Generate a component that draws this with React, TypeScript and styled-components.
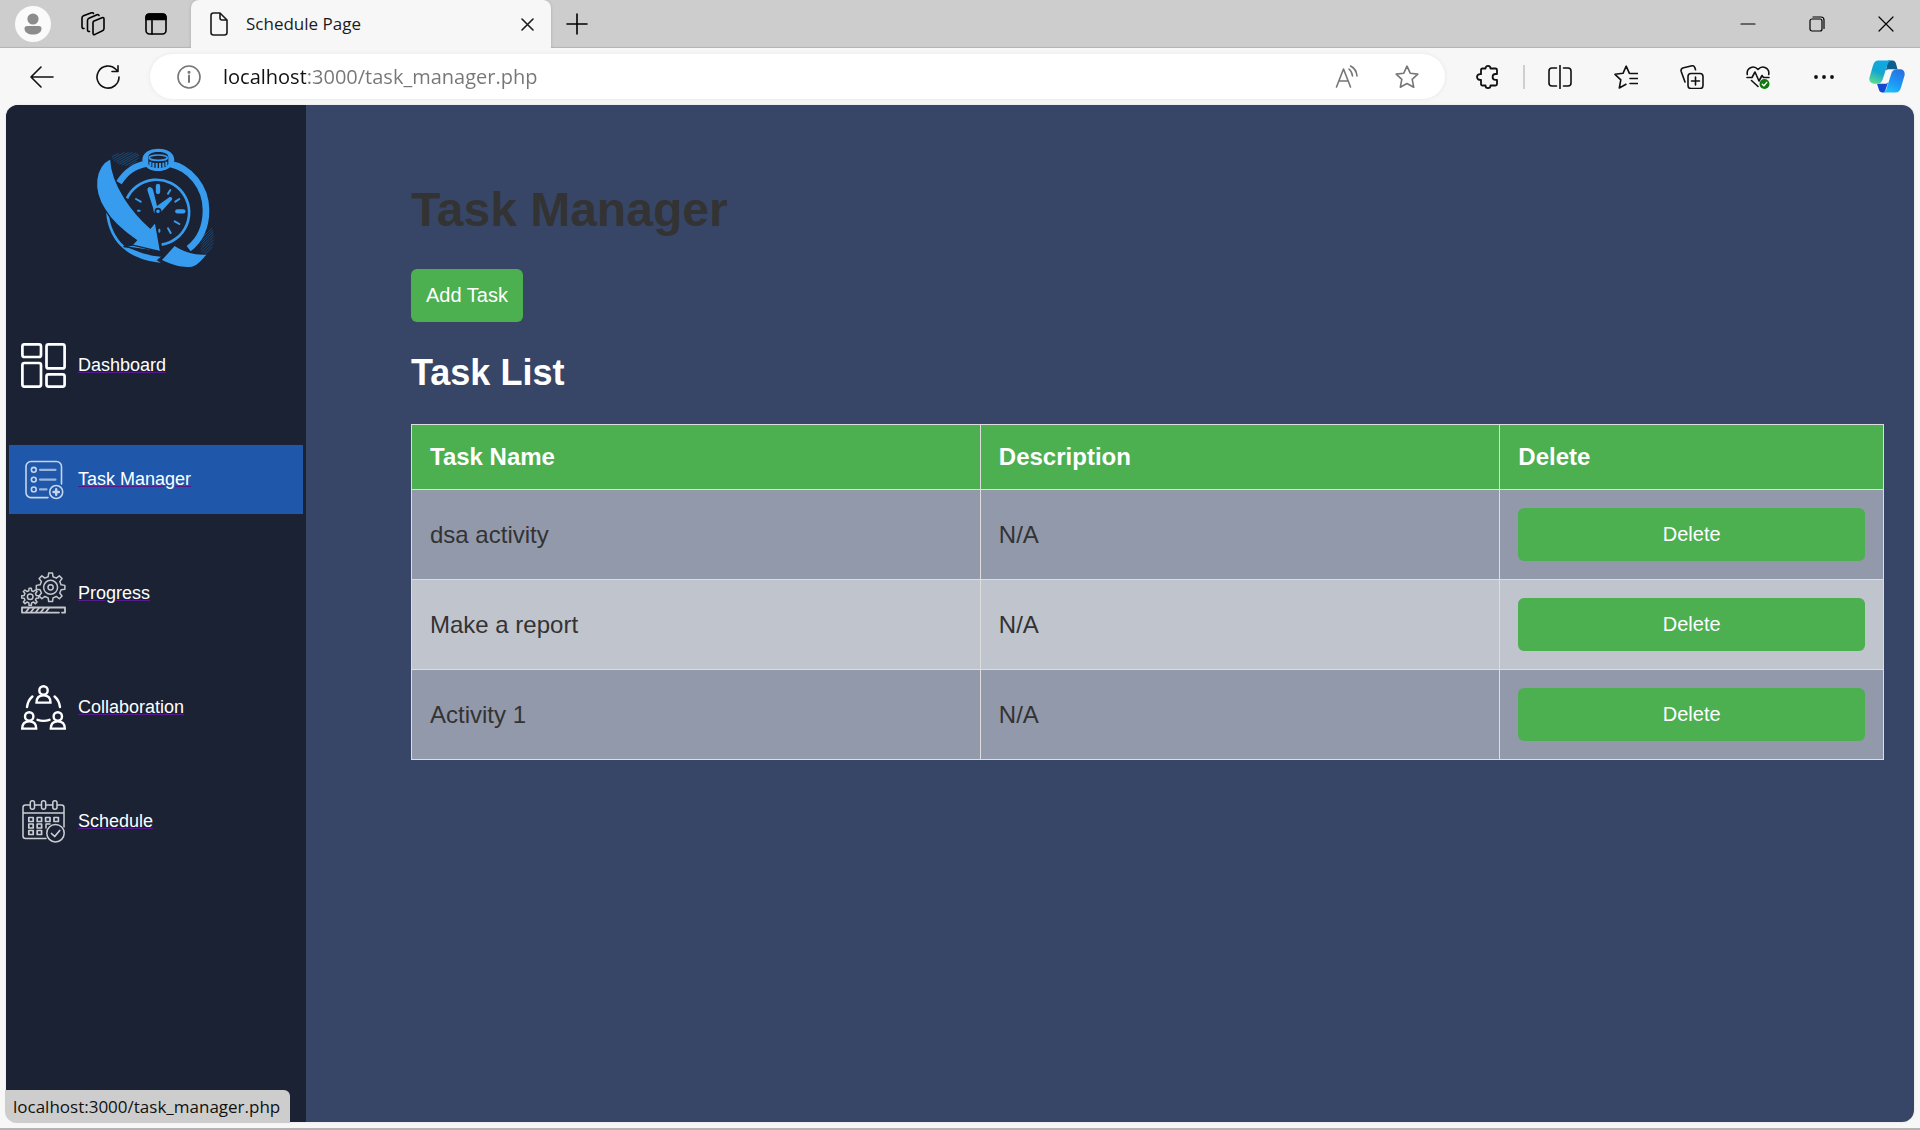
import React from "react";
import styled, { createGlobalStyle } from "styled-components";

const ui = `"Open Sans", "Noto Sans", sans-serif`;
const arial = `"Liberation Sans", Arial, sans-serif`;

const GlobalStyle = createGlobalStyle`
  *, *::before, *::after { box-sizing: border-box; }
  body { margin: 0; background: #f7f7f7; font-family: ${arial}; }
  button { font: inherit; color: inherit; border: 0; background: none; padding: 0; cursor: pointer; }
`;

const Window = styled.div`
  display: flex;
  flex-direction: column;
  min-height: 100vh;
  border-bottom: 2px solid #b3b3b3;
`;

const TabStrip = styled.div`
  display: flex;
  align-items: center;
  height: 48px;
  background: #cdcdcd;
  box-shadow: inset 0 -2px 1px -1px #b4b4b4;
  font-family: ${ui};
`;

const StripButton = styled.button<{ $w: number }>`
  display: flex;
  align-items: center;
  justify-content: center;
  width: ${(p) => p.$w}px;
  height: 48px;
`;

const Tab = styled.div`
  display: flex;
  align-items: center;
  width: 360px;
  height: 48px;
  padding: 0 8px 0 17px;
  gap: 16px;
  border-radius: 8px 8px 0 0;
  background: #f7f7f7;
  box-shadow: 0 0 3px #a9a9a9;
  clip-path: inset(0 -4px 0 -4px);
  font-size: 17px;
  line-height: 24px;
  color: #1b1b1b;
`;

const TabTitle = styled.span`
  flex: 1;
`;

const Spacer = styled.div`
  flex: 1;
`;

const Toolbar = styled.div`
  display: flex;
  align-items: center;
  height: 57px;
  padding: 0 3px 0 9px;
  background: #f7f7f7;
  color: #111;
`;

const ToolButton = styled.button<{ $w?: number }>`
  display: flex;
  align-items: center;
  justify-content: center;
  flex: none;
  width: ${(p) => p.$w ?? 66}px;
  height: 45px;
`;

const AddressBar = styled.div`
  display: flex;
  align-items: center;
  flex: 1;
  height: 45px;
  margin: 0 10px 0 9px;
  padding: 0 8px 0 9px;
  border-radius: 23px;
  background: #fff;
  box-shadow: 0 0 4px #e6e6e6;
  color: #767676;
`;

const AddressInput = styled.input`
  flex: 1;
  min-width: 0;
  height: 32px;
  margin: 0;
  padding: 0 0 0 4px;
  border: 0;
  outline: 0;
  font-family: ${ui};
  font-size: 20px;
  line-height: 32px;
  color: #767676;
  background: linear-gradient(90deg, #111 87px, #767676 87px);
  -webkit-background-clip: text;
  background-clip: text;
  -webkit-text-fill-color: transparent;
`;

const Divider = styled.div`
  width: 2px;
  height: 24px;
  margin: 0 2px;
  background: #cfcfcf;
`;

const Viewport = styled.div`
  position: relative;
  display: flex;
  flex: 1;
  margin: 0 6px 6px;
  border-radius: 12px;
  background: #374666;
  box-shadow: 0 0 2px #d5d5d5;
`;

const Sidebar = styled.aside`
  flex: none;
  width: 300px;
  padding: 25px 3px;
  border-radius: 12px 0 0 12px;
  background: #1a2234;
`;

const Brand = styled.div`
  display: flex;
  justify-content: center;
  margin-bottom: 51px;
`;

const Nav = styled.nav`
  display: flex;
  flex-direction: column;
  gap: 45px;
`;

const NavLink = styled.a<{ $active?: boolean }>`
  display: flex;
  align-items: center;
  gap: 12px;
  padding: 12px;
  background: ${(p) => (p.$active ? "#1f57ab" : "transparent")};
  color: #fff;
  font-size: 18px;
  line-height: 21px;
  text-decoration: none;

  span {
    text-decoration: underline #551a8b;
  }
`;

const Main = styled.main`
  flex: 1;
  min-width: 0;
  padding: 77px 30px 30px 105px;
  color: #333;
`;

const Title = styled.h1`
  margin: 0 0 32px;
  font-size: 48px;
  line-height: 55px;
`;

const Subtitle = styled.h2`
  margin: 30px 0;
  font-size: 36px;
  line-height: 42px;
  color: #fff;
`;

const GreenButton = styled.button<{ $block?: boolean }>`
  display: block;
  width: ${(p) => (p.$block ? "100%" : "auto")};
  padding: 15px;
  border-radius: 6px;
  background: #4caf50;
  color: #fff;
  font-size: 20px;
  line-height: 23px;
`;

const TaskTable = styled.table`
  width: 100%;
  border-collapse: collapse;
  font-size: 24px;
  line-height: 28px;

  th, td {
    padding: 18px;
    border: 1px solid #ddd;
    text-align: left;
  }
  th {
    background: #4caf50;
    color: #fff;
  }
  tbody tr { background: #9299ab; }
  tbody tr:nth-child(even) { background: #c0c4cc; }
`;

const StatusBubble = styled.div`
  position: absolute;
  left: -1px;
  bottom: -1px;
  height: 33px;
  padding: 0 10px 0 8px;
  border-radius: 0 6px 0 12px;
  background: #cdcdcd;
  color: #111;
  font-family: ${ui};
  font-size: 17px;
  line-height: 33px;
`;

type IconProps = { w?: number; h?: number; sw?: number; box?: string; children: React.ReactNode };

function Icon({ w = 24, h = 24, sw = 1.6, box, children }: IconProps) {
  return (
    <svg width={w} height={h} viewBox={box ?? `0 0 ${w} ${h}`} fill="none" stroke="currentColor"
      strokeWidth={sw} strokeLinecap="round" strokeLinejoin="round" aria-hidden="true">
      {children}
    </svg>
  );
}

const STAR = "M12 1.200l3.200 7 7.600.9-5.600 5.200 1.500 7.900-6.700-3.700-6.700 3.700 1.500-7.900L1.200 9.100l7.600-.9z";

function Logo() {
  return (
    <svg width="150" height="150" viewBox="3 0 450 450" fill="none" aria-label="Logo" role="img">
      <g stroke="#1d4a74" strokeWidth="3">
        <path d="M96 80l20-10M97 87l36-20M102 92l44-25M107 96l50-29M112 100l55-31M118 103l56-32M126 105l52-30M136 107l40-23M148 107l22-13" />
        <path d="M368 322l28-28M366 332l32-32M364 341l36-36M363 350l38-38M362 359l39-39M364 366l37-37M369 370l31-31M376 372l22-22" />
      </g>
      <path d="M117 158C140 122 164 108 200 101" stroke="#379bee" strokeWidth="19" />
      <path d="M268 101C330 112 378 172 378 240C378 290 360 330 326 356" stroke="#379bee" strokeWidth="20" />
      <path d="M78 243C82 320 130 388 243 398L230 391L243 380C185 376 140 350 131 346C105 322 92 290 88 262Z" fill="#379bee" />
      <path d="M187 92C186 68 208 56 235 56C262 56 284 68 283 92L272 108C262 128 206 128 198 108Z" fill="#379bee" />
      <path d="M205 82C205 70 218 66 235 66C252 66 265 70 265 82V102C258 118 212 118 205 102Z" fill="#1a2234" />
      <ellipse cx="235" cy="83" rx="27" ry="8" stroke="#379bee" strokeWidth="5" />
      <path d="M211 95v13M220 98v15M230 99v16M240 99v16M250 98v15M259 95v13" stroke="#379bee" strokeWidth="6" />
      <path d="M141 205A98 98 0 1 1 245 344" stroke="#379bee" strokeWidth="8" />
      <g stroke="#379bee" strokeLinecap="round">
        <path d="M234 168v18" strokeWidth="13" />
        <path d="M292 244h18" strokeWidth="13" />
        <path d="M271 180l-7 11M298 207l-12 8M284 274l14 8M264 295l8 14M238 299v6M168 207l14 8M174 242h5" strokeWidth="6" />
      </g>
      <path d="M202 180Q203 170 211 171Q219 174 220 182L231 228L269 201Q278 199 276 209L245 244Q240 254 230 252Q219 248 220 236Z" fill="#379bee" />
      <circle cx="234" cy="244" r="8" fill="#379bee" stroke="#1a2234" strokeWidth="5" />
      <path d="M92 85C42 110 36 180 74 238C96 276 130 304 169 331L155 346L131 350L242 366L226 276L211 294C164 252 95 170 92 85Z"
        fill="#379bee" stroke="#1a2234" strokeWidth="4" />
      <path d="M131 349L152 344L238 364" stroke="#1a2234" strokeWidth="4" />
      <path d="M284 348L246 390C275 405 310 414 335 410C354 406 366 388 379 374C346 376 312 367 284 348Z" fill="#379bee" />
    </svg>
  );
}

function DashboardIcon() {
  return (
    <Icon w={45} h={45} sw={2.7}>
      <rect x="1.400" y="1.400" width="18.600" height="12.600" rx="2" />
      <rect x="25.500" y="1.400" width="18.100" height="24" rx="2" />
      <rect x="1.400" y="20" width="18.600" height="23.600" rx="2" />
      <rect x="25.500" y="31.300" width="18.100" height="12.300" rx="2" />
    </Icon>
  );
}

function TaskIcon() {
  return (
    <Icon w={45} h={45} sw={1.6}>
      <g opacity="0.75">
        <path d="M27 40.600H10a5 5 0 0 1-5-5V9.500a5 5 0 0 1 5-5h25.500a5 5 0 0 1 5 5V27" />
        <circle cx="12.800" cy="12.800" r="2.400" />
        <circle cx="12.800" cy="22.600" r="2.400" />
        <circle cx="12.800" cy="32.400" r="2.400" />
        <path d="M19 12.800h15.500M19 22.600h15.500M19 32.400h6.500" strokeWidth="2.200" opacity="0.75" />
        <circle cx="35.200" cy="35" r="6.500" />
        <path d="M35.200 32.300v5.400M32.500 35h5.400" strokeWidth="2.400" />
      </g>
    </Icon>
  );
}

function gear(cx: number, cy: number, outer: number, inner: number, teeth: number) {
  const points: string[] = [];
  const step = (Math.PI * 2) / teeth;
  for (let i = 0; i < teeth; i++) {
    const mid = i * step - Math.PI / 2;
    [[-0.29, inner], [-0.17, outer], [0.17, outer], [0.29, inner]].forEach(([offset, r]) => {
      const angle = mid + offset * step;
      points.push(`${(cx + r * Math.cos(angle)).toFixed(2)},${(cy + r * Math.sin(angle)).toFixed(2)}`);
    });
  }
  return points.join(" ");
}

function ProgressIcon() {
  return (
    <Icon w={45} h={45} sw={1.5}>
      <g opacity="0.75">
        <polygon points={gear(29.6, 16.3, 14.4, 10.8, 8)} />
        <circle cx="29.600" cy="16.300" r="7" />
        <circle cx="29.600" cy="16.300" r="2.600" />
        <polygon points={gear(9.2, 25.8, 8.6, 6.2, 8)} />
        <circle cx="9.200" cy="25.800" r="2.800" />
        <path d="M38 41.600H1V36.500h43v5.100h-3" strokeWidth="1.800" />
        <path d="M5 41l3-4M10 41l3-4M15 41l3-4M20 41l3-4M25 41l3-4" strokeWidth="1.800" />
      </g>
    </Icon>
  );
}

function Person({ x, y }: { x: number; y: number }) {
  return (
    <g transform={`translate(${x} ${y})`}>
      <circle cx="0" cy="0" r="4.200" />
      <path d="M-7 12.200C-7 7.600-4.600 5 0 5s7 2.600 7 7.200z" strokeLinejoin="miter" />
    </g>
  );
}

function CollaborationIcon() {
  return (
    <Icon w={45} h={45} sw={2.4}>
      <Person x={22.5} y={5.4} />
      <Person x={8.2} y={31.4} />
      <Person x={36.8} y={31.4} />
      <path d="M11.400 11.500C8.400 14 6.600 17.500 6 22M33.600 11.500C36.600 14 38.400 17.500 39 22M16.500 34.800c4 1.400 8 1.400 12 0" />
    </Icon>
  );
}

function ScheduleIcon() {
  const cells = [[9.8, 20.5], [18.2, 20.5], [26.6, 20.5], [35, 20.5], [9.8, 27], [18.2, 27], [9.8, 33.5], [18.2, 33.5]];
  return (
    <Icon w={45} h={45} sw={1.5}>
      <g opacity="0.78">
        <path d="M8.800 6H4.500Q2 6 2 8.500V37q0 2.500 2.500 2.500H25M14 6h6M25.500 6h6M36.500 6h4q2.500 0 2.500 2.500V28M2 14h41" />
        <rect x="9.300" y="1.800" width="4.200" height="8.400" rx="2" />
        <rect x="20.500" y="1.800" width="4.200" height="8.400" rx="2" />
        <rect x="31.800" y="1.800" width="4.200" height="8.400" rx="2" />
        {cells.map(([x, y]) => (
          <rect key={`${x}-${y}`} x={x - 2} y={y - 2} width="4.400" height="4" strokeWidth="1.700" />
        ))}
        <path d="M25 29v-4h4" />
        <circle cx="34.500" cy="34.200" r="8.700" />
        <path d="M30.500 34.500l3.200 3 5-6" strokeWidth="1.700" />
      </g>
    </Icon>
  );
}

function CopilotIcon() {
  return (
    <svg width="36" height="33" viewBox="0 0 36 33" aria-hidden="true">
      <defs>
        <linearGradient id="cp-left" x1="0.6" y1="0" x2="0.2" y2="1">
          <stop offset="0" stopColor="#0fa8e4" />
          <stop offset="0.5" stopColor="#13a7cf" />
          <stop offset="1" stopColor="#5fdc8c" />
        </linearGradient>
        <linearGradient id="cp-right" x1="0.8" y1="0" x2="0.3" y2="1">
          <stop offset="0" stopColor="#2a6fe0" />
          <stop offset="0.6" stopColor="#1b9af7" />
          <stop offset="1" stopColor="#1cc3fb" />
        </linearGradient>
      </defs>
      <path d="M19 .500h4.500c2 0 3 1.500 3.600 3.500L28.500 9.300H20c-1.500 0-2.300.4-3.200 1.500z" fill="#0c5f8e" />
      <path d="M8 23.700h8c1.500 0 2.300-.4 3.200-1.500L15.500 32.500h-2c-2.200 0-3.300-1.500-3.800-3.500z" fill="#1747d1" />
      <path d="M9.500.500H23c-2.800.3-4 2-4.700 4.500L13.800 19c-1 3.200-2.500 4.700-5.500 4.700H5c-3.500 0-5.300-2.700-4.500-6.200L4 5.500C5 2.200 6.500.500 9.500.500z" fill="url(#cp-left)" />
      <path d="M26.500 32.500H13c2.800-.3 4-2 4.700-4.500L22.200 14c1-3.200 2.500-4.700 5.500-4.700H31c3.500 0 5.300 2.700 4.500 6.200L32 27.500c-1 3.300-2.500 5-5.500 5z" fill="url(#cp-right)" />
    </svg>
  );
}

const links = [
  { label: "Dashboard", icon: <DashboardIcon /> },
  { label: "Task Manager", icon: <TaskIcon />, active: true },
  { label: "Progress", icon: <ProgressIcon /> },
  { label: "Collaboration", icon: <CollaborationIcon /> },
  { label: "Schedule", icon: <ScheduleIcon /> },
];

const tasks = [
  { name: "dsa activity", description: "N/A" },
  { name: "Make a report", description: "N/A" },
  { name: "Activity 1", description: "N/A" },
];

function BrowserTabs() {
  return (
    <TabStrip>
      <StripButton $w={66} aria-label="Profile">
        <svg width="36" height="36" viewBox="0 0 36 36" aria-hidden="true">
          <circle cx="18" cy="18" r="18" fill="#fafafa" />
          <circle cx="18" cy="13" r="5.600" fill="#8c8c8c" />
          <path d="M9.500 22.500q0-2.500 2.500-2.500h12q2.500 0 2.500 2.500c0 4-4 6-8.500 6s-8.500-2-8.500-6z" fill="#8c8c8c" />
        </svg>
      </StripButton>
      <StripButton $w={54} aria-label="Workspaces">
        <Icon>
          <path d="M12.500 9.200l8.500-3.500q2-.7 2 1.300v9.500q0 1.600-1.500 2.300l-7.500 3.600q-2 .8-2-1.300V11q0-1.300.5-1.800z" />
          <path d="M8.500 19.500q-2 .3-2-1.800V8.500q0-1.500 1.500-2.200L16 2.700q1.600-.5 2 .8" />
          <path d="M3 16.500q-2 .2-2-1.800V6q0-1.500 1.500-2.200L10.500.8q1.500-.5 2 .7" />
        </Icon>
      </StripButton>
      <StripButton $w={71} aria-label="Tab actions">
        <Icon w={22} h={22}>
          <rect x="1" y="1" width="20" height="20" rx="3.500" />
          <path d="M1 6.500V4.500Q1 1 4.500 1h13Q21 1 21 4.500v2z" fill="currentColor" />
          <path d="M7 7v14" />
        </Icon>
      </StripButton>
      <Tab>
        <Icon w={22} h={24}>
          <path d="M5.500 1H12l7 7v12.500q0 2.500-2.500 2.500h-11Q3 23 3 20.500v-17Q3 1 5.500 1zM12 1.500V6q0 2 2 2h5" />
        </Icon>
        <TabTitle>Schedule Page</TabTitle>
        <StripButton $w={32} aria-label="Close tab">
          <Icon w={13} h={13}><path d="M1 1l11 11M12 1L1 12" /></Icon>
        </StripButton>
      </Tab>
      <StripButton $w={52} aria-label="New tab">
        <Icon w={22} h={22}><path d="M11 1v20M1 11h20" /></Icon>
      </StripButton>
      <Spacer />
      <StripButton $w={69} aria-label="Minimize">
        <Icon w={16} h={16} sw={1.2}><path d="M1 8h14" /></Icon>
      </StripButton>
      <StripButton $w={69} aria-label="Restore">
        <Icon w={16} h={16} sw={1.2}>
          <rect x="1" y="3" width="12" height="12" rx="2" />
          <path d="M4 1h8q3 0 3 3v8.500" />
        </Icon>
      </StripButton>
      <StripButton $w={69} aria-label="Close">
        <Icon w={16} h={16} sw={1.2}><path d="M1 1l14 14M15 1L1 15" /></Icon>
      </StripButton>
    </TabStrip>
  );
}

function BrowserToolbar() {
  return (
    <Toolbar>
      <ToolButton aria-label="Back">
        <Icon><path d="M23 12H1M11 2L1 12l10 10" /></Icon>
      </ToolButton>
      <ToolButton aria-label="Refresh">
        <Icon><path d="M23 12A11 11 0 1 1 19.800 4.300L21.500 6M22 .800v5.700h-6" /></Icon>
      </ToolButton>
      <AddressBar>
        <ToolButton $w={60} aria-label="Site information">
          <Icon>
            <circle cx="12" cy="12" r="11" />
            <path d="M12 10.500v6.500" strokeWidth="2" />
            <circle cx="12" cy="7.300" r="0.700" fill="currentColor" />
          </Icon>
        </ToolButton>
        <AddressInput aria-label="Address" defaultValue="localhost:3000/task_manager.php" spellCheck={false} />
        <ToolButton $w={60} aria-label="Read aloud">
          <Icon><path d="M1.500 22L8.500 4l7 18M4 16h9M14 4q3 2.500 3.500 7M15.500 1q6 3 6.500 10" /></Icon>
        </ToolButton>
        <ToolButton $w={60} aria-label="Add to favorites">
          <Icon><path d={STAR} /></Icon>
        </ToolButton>
      </AddressBar>
      <ToolButton aria-label="Extensions">
        <Icon sw={1.8}>
          <path d="M6.500 3.500H9.500C9.500 2 10.600.9 12 .9S14.500 2 14.500 3.500h5q1.500 0 1.500 1.500v4h-1.500a2.900 2.900 0 0 0 0 5.800H21V19q0 1.500-1.500 1.500h-5c0 1.500-1.100 2.600-2.500 2.600S9.500 22 9.500 20.500h-3Q5 20.500 5 19v-4.200C2.500 15.200 1 13.700 1 12s1.500-3.300 4-2.800V5q0-1.500 1.500-1.500z" />
        </Icon>
      </ToolButton>
      <Divider />
      <ToolButton aria-label="Split screen">
        <Icon><path d="M12 .500v23M8.500 3H4Q1 3 1 6v12q0 3 3 3h4.500M15.500 3H20q3 0 3 3v12q0 3-3 3h-4.500" /></Icon>
      </ToolButton>
      <ToolButton aria-label="Favorites">
        <Icon>
          <path d="M12 19.300L5.300 23l1.500-8.200L1 9.300l8-1 3.200-7.100 3.200 7.100M16.500 8.500H23.500M16 13.500h7.500M16 18.500h7.500" />
        </Icon>
      </ToolButton>
      <ToolButton aria-label="Collections">
        <Icon>
          <rect x="8" y="8.500" width="15" height="15" rx="3" />
          <path d="M15.500 12v8M11.500 16h8M5 17L1.200 6.500q-.7-2.500 1.500-3.500L12 .800q2-.3 2.700 1.500l.8 2.500" />
        </Icon>
      </ToolButton>
      <ToolButton aria-label="Browser essentials">
        <Icon>
          <path d="M1.300 9.500C.2 3 7.500-.5 12 4.500 16.500-.5 23.800 3 22.700 9.500M1 12.500h5l3-5.500 4 9 3-5.500 1.500 2H23M5.500 15.500l6.500 6" />
          <circle cx="18.500" cy="19" r="5" fill="#0f7b0f" stroke="none" />
          <path d="M16.300 19.200l1.600 1.500 2.900-3.300" stroke="#fff" strokeWidth="1.400" />
        </Icon>
      </ToolButton>
      <ToolButton aria-label="Settings and more">
        <Icon>
          <g fill="currentColor" stroke="none">
            <circle cx="4" cy="12" r="1.900" />
            <circle cx="12" cy="12" r="1.900" />
            <circle cx="20" cy="12" r="1.900" />
          </g>
        </Icon>
      </ToolButton>
      <ToolButton $w={60} aria-label="Copilot"><CopilotIcon /></ToolButton>
    </Toolbar>
  );
}

export default function App() {
  return (
    <Window>
      <GlobalStyle />
      <BrowserTabs />
      <BrowserToolbar />
      <Viewport>
        <Sidebar>
          <Brand><Logo /></Brand>
          <Nav>
            {links.map((link) => (
              <NavLink key={link.label} href="#" $active={link.active}>
                {link.icon}
                <span>{link.label}</span>
              </NavLink>
            ))}
          </Nav>
        </Sidebar>
        <Main>
          <Title>Task Manager</Title>
          <GreenButton>Add Task</GreenButton>
          <Subtitle>Task List</Subtitle>
          <TaskTable>
            <thead>
              <tr><th>Task Name</th><th>Description</th><th>Delete</th></tr>
            </thead>
            <tbody>
              {tasks.map((task) => (
                <tr key={task.name}>
                  <td>{task.name}</td>
                  <td>{task.description}</td>
                  <td><GreenButton $block>Delete</GreenButton></td>
                </tr>
              ))}
            </tbody>
          </TaskTable>
        </Main>
        <StatusBubble>localhost:3000/task_manager.php</StatusBubble>
      </Viewport>
    </Window>
  );
}
